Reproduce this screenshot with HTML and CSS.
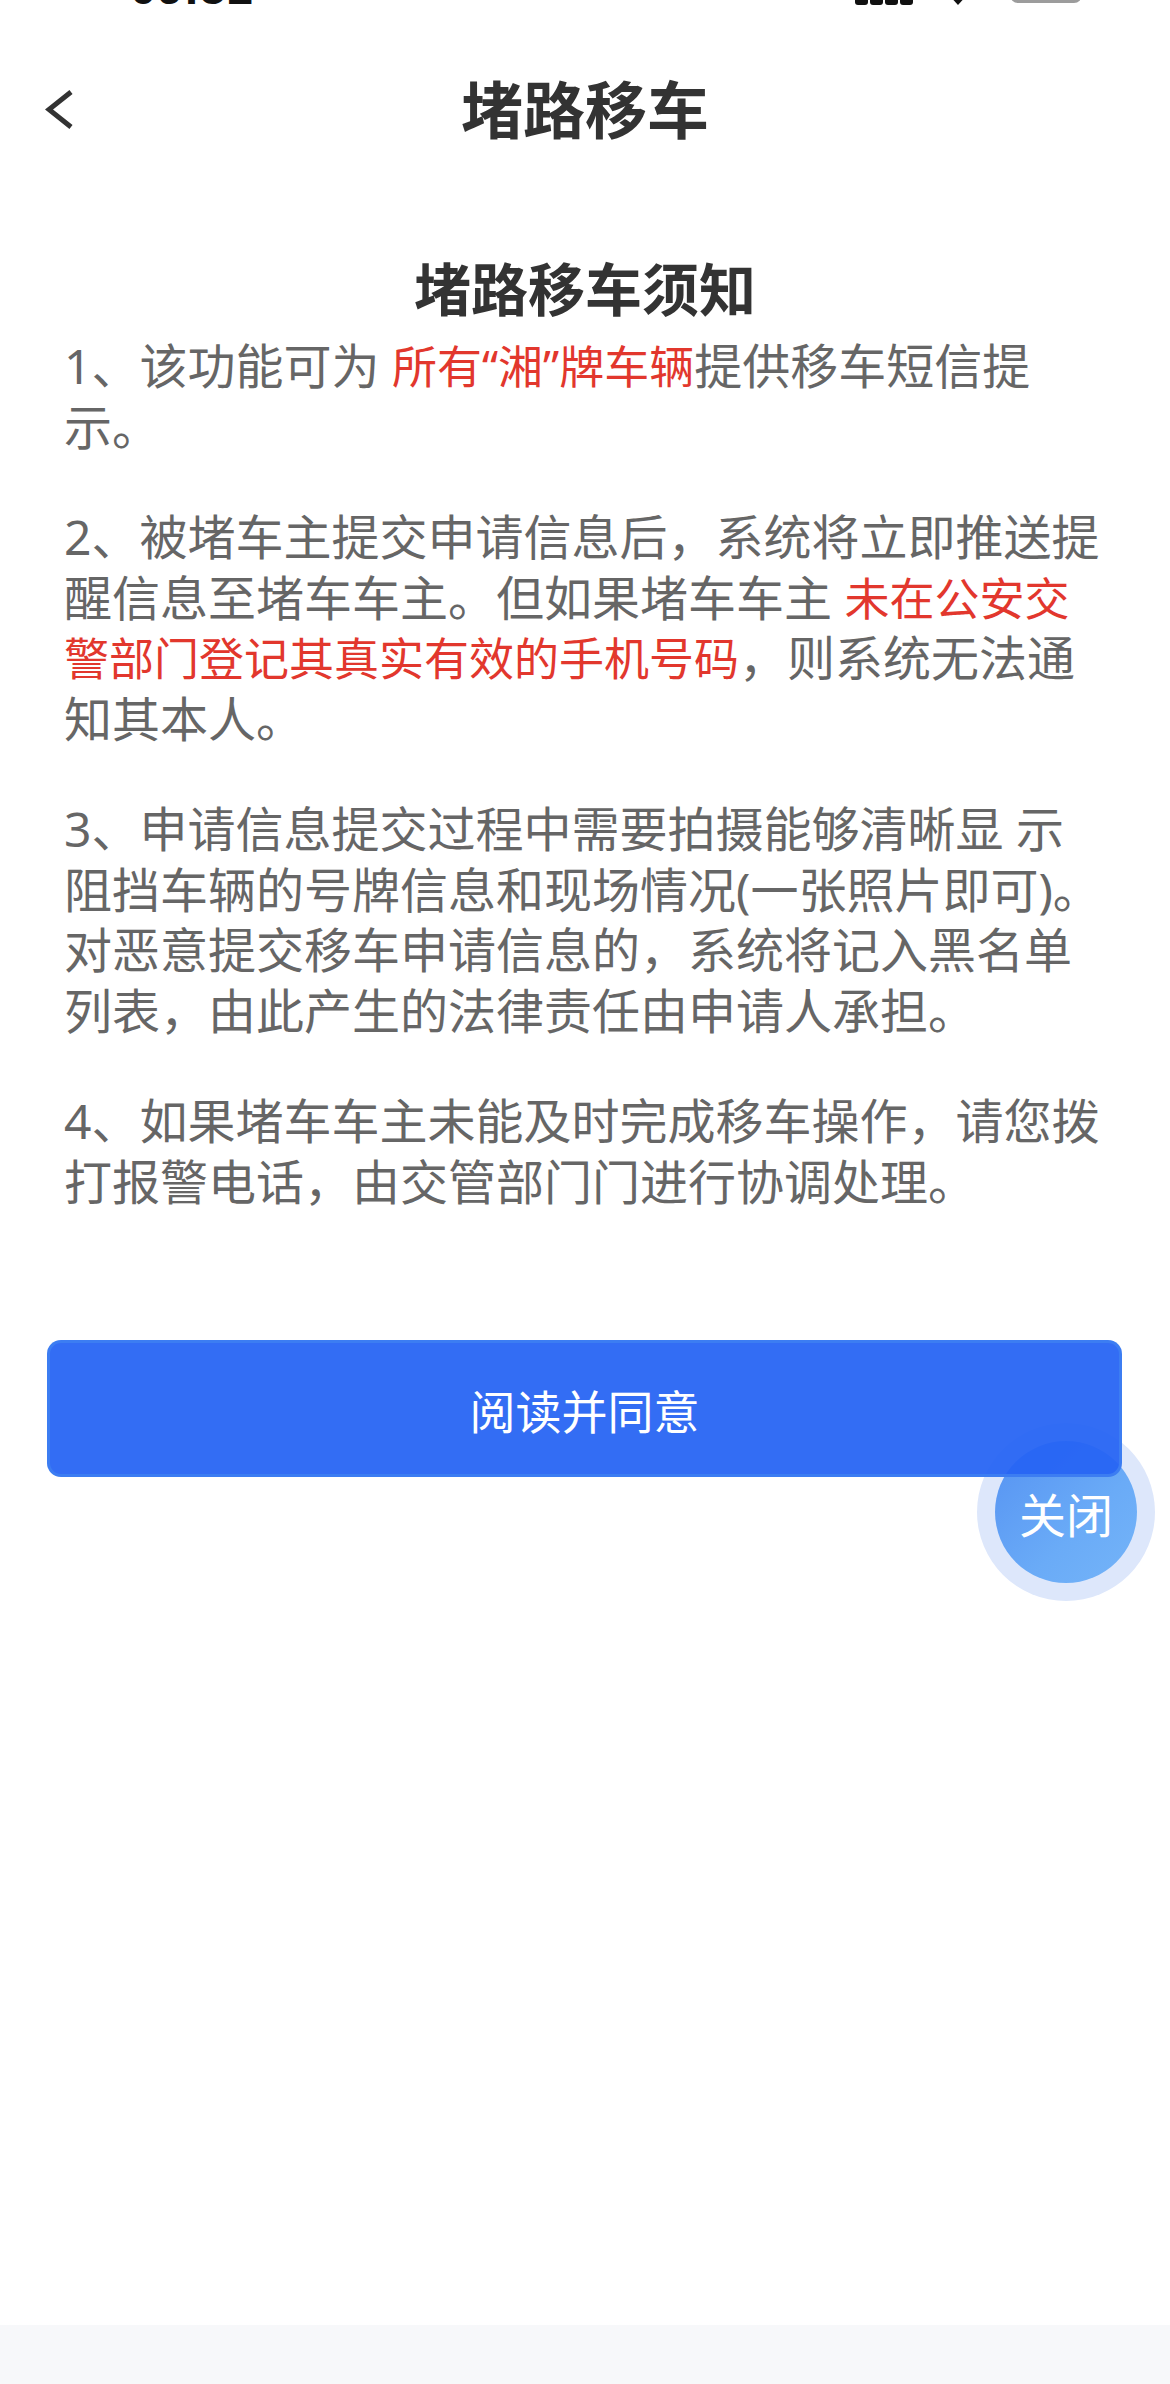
FILE: index.html
```html
<!DOCTYPE html>
<html lang="zh-CN">
<head>
<meta charset="utf-8">
<title>堵路移车</title>
<link rel="stylesheet" href="styles.css">
</head>
<body>
<div class="page">
  <div class="status">
    <span class="time">09:51</span>
    <svg class="sys" width="240" height="6" viewBox="0 34 240 6">
      <rect x="5" y="0" width="13" height="39" rx="3" fill="#111"/>
      <rect x="20" y="0" width="13" height="39" rx="3" fill="#111"/>
      <rect x="35" y="0" width="13" height="39" rx="3" fill="#111"/>
      <rect x="50" y="0" width="13" height="39" rx="3" fill="#111"/>
      <path d="M98 28 L108 39 L118 28 Z" fill="#111"/>
      <rect x="160" y="8" width="72" height="29" rx="8" fill="#9c9c9c"/>
    </svg>
  </div>

  <header class="nav">
    <svg class="back" width="30" height="42" viewBox="0 0 30 42">
      <path d="M26 3 L4 20.5 L26 38" fill="none" stroke="#333" stroke-width="5" stroke-linejoin="miter"/>
    </svg>
    <h1 class="nav-title">堵路移车</h1>
    <span class="nav-spacer"></span>
  </header>

  <main class="content">
    <h2 class="notice-title">堵路移车须知</h2>
    <p class="item">1、该功能可为 <span class="red">所有“湘”牌车辆</span>提供移车短信提示。</p>
    <p class="item">2、被堵车主提交申请信息后，系统将立即推送提醒信息至堵车车主。但如果堵车车主 <span class="red">未在公安交警部门登记其真实有效的手机号码</span>，则系统无法通知其本人。</p>
    <p class="item">3、申请信息提交过程中需要拍摄能够清晰显 示阻挡车辆的号牌信息和现场情况(一张照片即可)。对恶意提交移车申请信息的，系统将记入黑名单列表，由此产生的法律责任由申请人承担。</p>
    <p class="item last">4、如果堵车车主未能及时完成移车操作，请您拨打报警电话，由交管部门门进行协调处理。</p>
  </main>

  <div class="actions">
    <button class="agree">阅读并同意</button>
    <div class="close"><span class="close-inner">关闭</span></div>
  </div>

  <div class="bottom-bar"></div>
</div>
</body>
</html>
```

FILE: styles.css
```css
html, body {
  margin: 0;
  padding: 0;
  background: #ffffff;
}

.page {
  width: 1170px;
  min-height: 2384px;
  display: flex;
  flex-direction: column;
  font-family: "Noto Sans", "Noto Sans CJK SC", sans-serif;
  background: #ffffff;
}

/* cropped status bar */
.status {
  height: 6px;
  overflow: hidden;
  display: flex;
  align-items: flex-start;
}

.time {
  font-family: "Liberation Sans", sans-serif;
  font-weight: 700;
  font-size: 48px;
  line-height: 48px;
  color: #111;
  margin-left: 130px;
  margin-top: -36px;
}

.sys {
  margin-left: auto;
  margin-right: 80px;
  display: block;
}

/* nav bar */
.nav {
  height: 208px;
  display: grid;
  grid-template-columns: 1fr auto 1fr;
  align-items: center;
}

.back {
  justify-self: start;
  margin-left: 45px;
  display: block;
}

.nav-title {
  margin: 0;
  font-size: 62px;
  line-height: 1;
  font-weight: 700;
  color: #333333;
}

/* notice content */
.content {
  padding: 0 64px;
}

.notice-title {
  margin: 40px 0 12px;
  text-align: center;
  font-size: 57px;
  line-height: 70px;
  font-weight: 700;
  color: #333333;
}

.item {
  margin: 0 0 50px;
  font-size: 48px;
  line-height: 60.5px;
  color: #666666;
}

.item.last {
  margin-bottom: 0;
}

.red {
  color: #e2372d;
  font-size: 45px;
  line-height: 1;
}

/* actions */
.actions {
  position: relative;
  margin-top: 128px;
  padding: 0 48px 0 47px;
}

.agree {
  position: relative;
  z-index: 2;
  display: block;
  width: 100%;
  height: 137px;
  box-sizing: border-box;
  border: 3px solid rgba(62, 126, 242, 0.95);
  border-radius: 14px;
  background: rgba(38, 100, 243, 0.94);
  color: #ffffff;
  font-family: "Noto Sans", "Noto Sans CJK SC", sans-serif;
  font-size: 46px;
  padding: 0;
  cursor: pointer;
}

.close {
  position: absolute;
  z-index: 1;
  left: 977px;
  top: 83px;
  width: 178px;
  height: 178px;
  border-radius: 50%;
  background: #dde7fb;
  display: flex;
  align-items: center;
  justify-content: center;
}

.close-inner {
  width: 142px;
  height: 142px;
  border-radius: 50%;
  background: linear-gradient(135deg, #5592f2 0%, #6aabf7 60%, #74b4f8 100%);
  color: #ffffff;
  font-size: 47px;
  display: flex;
  align-items: center;
  justify-content: center;
}

.bottom-bar {
  margin-top: auto;
  height: 59px;
  background: #f7f8fa;
}
```
